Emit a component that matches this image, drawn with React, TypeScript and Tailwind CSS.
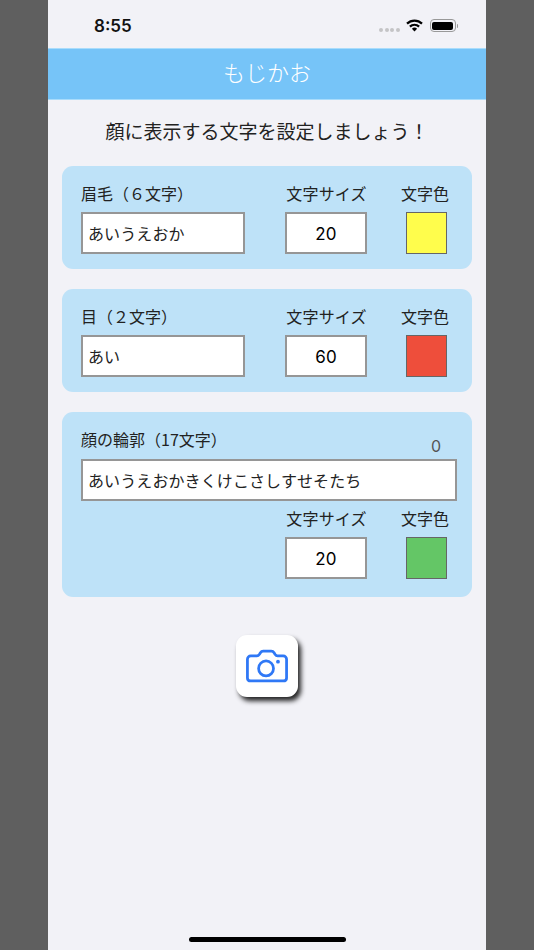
const jp = "font-['Noto_Sans_CJK_JP','Noto_Sans',sans-serif]";

function Label({ children, className = "" }: { children: React.ReactNode; className?: string }) {
  return <div className={`text-[16px] leading-[24px] text-[#222] whitespace-nowrap ${className}`}>{children}</div>;
}

function Field({ children, className = "" }: { children: React.ReactNode; className?: string }) {
  return (
    <div className={`h-[42px] bg-white border-2 border-[#969696] flex items-center text-[16px] tracking-[0.1px] text-[#222] ${className}`}>
      {children}
    </div>
  );
}

function SizeColor({ size, color }: { size: string; color: string }) {
  return (
    <>
      <div className="w-[82px] flex flex-col items-center">
        <Label className="pl-[1px] tracking-[0.2px]">文字サイズ</Label>
        <Field className="w-[82px] justify-center mt-[7px] text-[17px] text-black font-['Inter',sans-serif] pt-[3px]">{size}</Field>
      </div>
      <div className="w-[48px] ml-[33px] flex flex-col items-start">
        <Label className="pl-[1px]">文字色</Label>
        <div className="w-[41px] h-[42px] ml-[6px] mt-[7px] border border-[#666]" style={{ backgroundColor: color }} />
      </div>
    </>
  );
}

function Card({ label, value, size, color }: { label: string; value: string; size: string; color: string }) {
  return (
    <div className="w-[410px] h-[103px] bg-[#bee2f8] rounded-[11px] pl-[19px] pt-[15px] flex">
      <div className="w-[164px] mr-[40px]">
        <Label>{label}</Label>
        <Field className="w-[164px] pl-[5px] mt-[7px]">{value}</Field>
      </div>
      <SizeColor size={size} color={color} />
    </div>
  );
}

export default function App() {
  return (
    <div className={`w-[534px] h-[950px] bg-[#5f5f5f] flex justify-center overflow-hidden ${jp}`}>
      <div className="w-[438px] h-[950px] bg-[#f2f2f7] flex flex-col items-center relative">
        <div className="w-full h-[48px] flex items-center justify-between pl-[46px] pr-[28px] shrink-0">
          <span className="text-[17px] font-semibold text-[#111] font-['Inter',sans-serif] mt-[5px]">8:55</span>
          <div className="flex items-center mt-[3px]">
            <div className="flex gap-[1.5px] mt-[8px] mr-[6px]">
              <i className="w-[4px] h-[4px] rounded-full bg-[#c4c4c6]" />
              <i className="w-[4px] h-[4px] rounded-full bg-[#c4c4c6]" />
              <i className="w-[4px] h-[4px] rounded-full bg-[#c4c4c6]" />
              <i className="w-[4px] h-[4px] rounded-full bg-[#c4c4c6]" />
            </div>
            <svg width="17" height="13" viewBox="0 0 17 13" className="mr-[7px]">
              <path d="M1 4.6A10.8 10.8 0 0 1 16 4.6" fill="none" stroke="#000" strokeWidth="2.2" />
              <path d="M3.9 7.6A6.6 6.6 0 0 1 13.1 7.6" fill="none" stroke="#000" strokeWidth="2.2" />
              <path d="M5.9 9.8a3.600 3.600 0 0 1 5.200 0L8.500 12.600z" fill="#000" />
            </svg>
            <div className="w-[26px] h-[13px] rounded-[4px] border border-[#999] p-[1.5px]">
              <div className="w-full h-full rounded-[2px] bg-black" />
            </div>
            <div className="w-[1.5px] h-[4px] bg-[#999] ml-[1px] rounded-r-sm" />
          </div>
        </div>

        <div className="w-full h-[52px] shrink-0 bg-[#76c4f8] border-y border-[#a9dcfb] flex items-center justify-center text-white text-[22px] font-light pb-[5px]">
          もじかお
        </div>

        <div className="mt-[18px] h-[26px] flex items-center text-[19px] text-[#222]">
          顔に表示する文字を設定しましょう！
        </div>

        <div className="mt-[22px] flex flex-col gap-[20px]">
          <Card label="眉毛（６文字）" value="あいうえおか" size="20" color="#fffd4c" />
          <Card label="目（２文字）" value="あい" size="60" color="#ee4e3b" />

          <div className="w-[410px] h-[185px] bg-[#bee2f8] rounded-[11px] px-[19px] pt-[15px] relative">
            <Label>顔の輪郭（17文字）</Label>
            <span className="absolute right-[31px] top-[23px] text-[16px] leading-[22px] text-[#555] font-['Inter',sans-serif]">0</span>
            <Field className="w-[376px] pl-[5px] mt-[8px]">あいうえおかきくけこさしすせそたち</Field>
            <div className="flex mt-[5px] ml-[204px]">
              <SizeColor size="20" color="#64c666" />
            </div>
          </div>
        </div>

        <button className="mt-[38px] w-[62px] h-[62px] bg-white rounded-[11px] shadow-[3px_4px_5px_rgba(0,0,0,0.85)] flex items-center justify-center">
          <svg width="42" height="34" viewBox="0 0 44 34" fill="none" stroke="#2f78f6" strokeWidth="2.9" strokeLinejoin="round">
            <path d="M5 6.500h6.500c1.200 0 1.800-.6 2.600-1.800l1-1.600C15.800 2 16.500 1.500 18 1.500h8.500c1.500 0 2.200.5 2.900 1.600l1 1.600c.8 1.200 1.400 1.800 2.600 1.800H39c2 0 3.500 1.500 3.500 3.500v19.500c0 2-1.500 3.200-3.500 3.200H5c-2 0-3.500-1.200-3.500-3.200V10c0-2 1.500-3.500 3.500-3.500z" />
            <circle cx="21" cy="19.500" r="7.800" />
            <circle cx="33.500" cy="12.500" r="2" fill="#2f78f6" stroke="none" />
          </svg>
        </button>

        <div className="absolute bottom-[8px] left-[141px] w-[157px] h-[5px] rounded-full bg-black" />
      </div>
    </div>
  );
}
